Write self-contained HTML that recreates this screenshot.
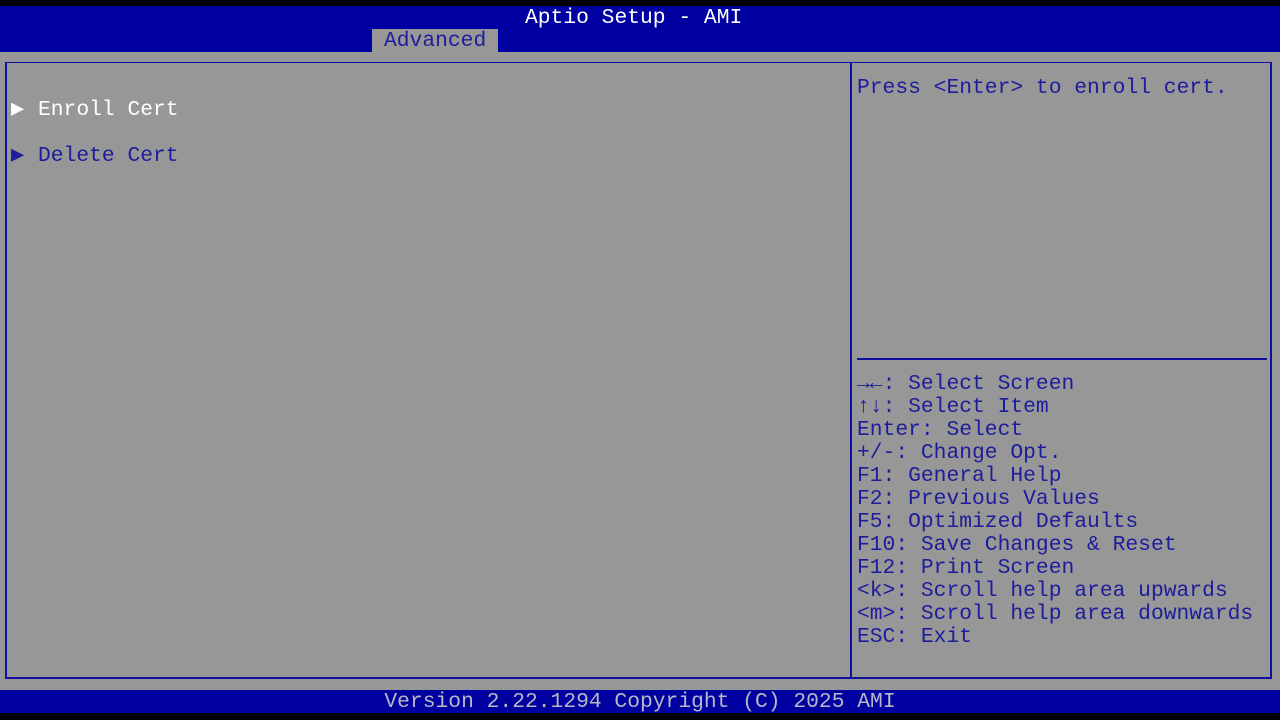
<!DOCTYPE html>
<html><head><style>
body{margin:0;width:1280px;height:720px;background:#000;position:relative;overflow:hidden;font-family:"Liberation Mono","DejaVu Sans Mono",monospace;font-size:21.3px;}
div{position:absolute;}
.t{white-space:pre;line-height:23px;}
</style></head><body>
<div style="left:0;top:6px;width:1280px;height:46px;background:#0000a0"></div>
<div class="t" style="left:525px;top:7px;color:#fff;">Aptio Setup - AMI</div>
<div style="left:372px;top:29px;width:126px;height:23px;background:#979797"></div>
<div class="t" style="left:384px;top:30px;color:#1c1c9c;">Advanced</div>
<div style="left:0;top:52px;width:1280px;height:638px;background:#979797"></div>
<div style="left:5px;top:62px;width:1263px;height:614px;border:1px solid #1010a0;border-left:2px solid #1010a0;border-right:2px solid #1010a0;border-bottom:2px solid #1010a0;box-sizing:content-box"></div>
<div style="left:850px;top:62px;width:2px;height:617px;background:#1010a0"></div>
<div style="left:857px;top:358px;width:410px;height:2px;background:#1010a0"></div>
<div class="t" style="left:11px;top:98px;color:#fff;font-size:22px">▶</div>
<div class="t" style="left:38px;top:99px;color:#fff;">Enroll Cert</div>
<div class="t" style="left:11px;top:144px;color:#1c1c9c;font-size:22px">▶</div>
<div class="t" style="left:38px;top:145px;color:#1c1c9c;">Delete Cert</div>
<div class="t" style="left:857px;top:77px;color:#1c1c9c;">Press &lt;Enter&gt; to enroll cert.</div>
<div class="t" style="left:857px;top:373px;color:#1c1c9c;"><b>→←</b>: Select Screen
<b>↑↓</b>: Select Item
Enter: Select
+/-: Change Opt.
F1: General Help
F2: Previous Values
F5: Optimized Defaults
F10: Save Changes &amp; Reset
F12: Print Screen
&lt;k&gt;: Scroll help area upwards
&lt;m&gt;: Scroll help area downwards
ESC: Exit</div>
<div style="left:0;top:690px;width:1280px;height:23px;background:#0000a0"></div>
<div class="t" style="left:0;top:691px;width:1280px;text-align:center;color:#b8b8c8;">Version 2.22.1294 Copyright (C) 2025 AMI</div>
</body></html>
